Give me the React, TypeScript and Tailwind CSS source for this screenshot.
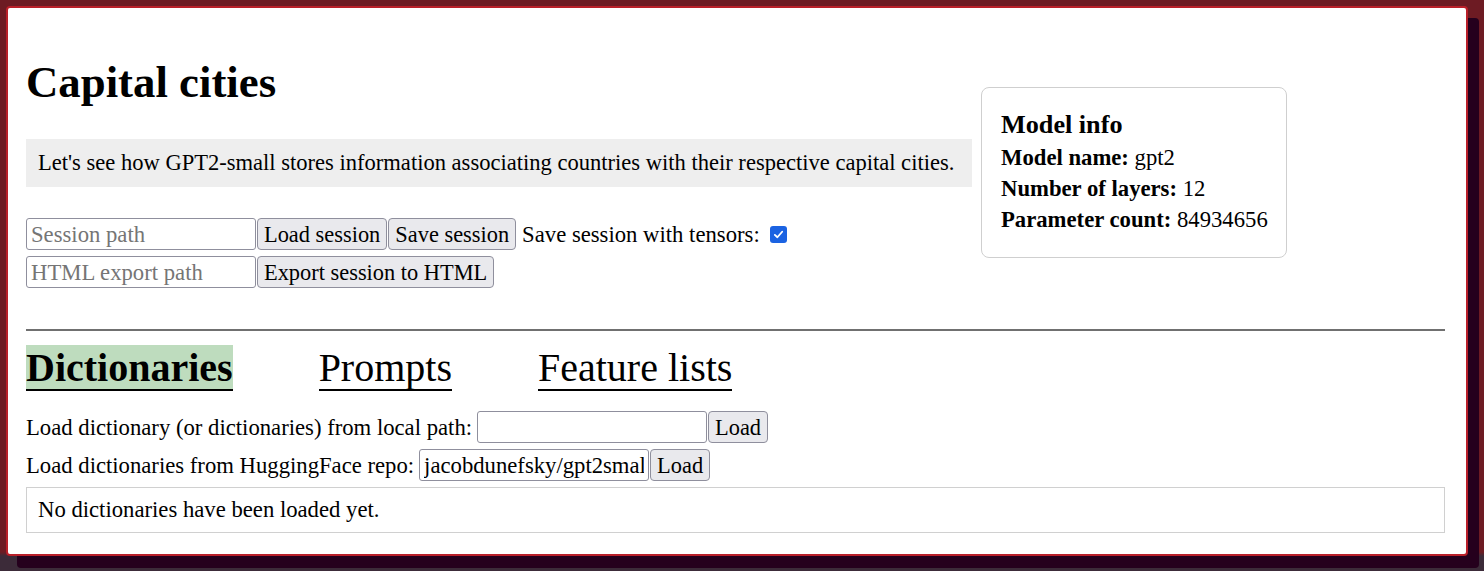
import React from "react";

function Checkbox() {
  return (
    <span className="ml-[9px] mt-[1px] inline-flex h-[17px] w-[17px] items-center justify-center rounded-[3px] bg-[#1b63e2]">
      <svg width="11" height="11" viewBox="0 0 12 12" fill="none">
        <path d="M2 6.4 L4.8 9 L10 3" stroke="white" strokeWidth="2" strokeLinecap="round" strokeLinejoin="round" />
      </svg>
    </span>
  );
}

const inputCls =
  "h-[32px] w-[230px] border border-[#8f8f9d] rounded-[3px] px-[4px] pt-[2px] bg-white text-black placeholder:text-[#757575] outline-none";
const btnCls =
  "h-[32px] px-[6px] pt-[1px] border border-[#8f8f9d] rounded-[4px] bg-[#e9e9ed] text-black whitespace-nowrap text-[22.4px] leading-[26px]";

export default function App() {
  return (
    <div className="w-[1484px] h-[571px] overflow-hidden pt-[6px] pl-[6px] bg-[linear-gradient(to_bottom,#6d1b23_0px,#6d1b23_552px,#3c2b39_556px)] font-['Liberation_Serif',serif] text-[22.7px] text-black">
      <div className="w-[1462px] h-[550px] bg-white border-2 border-[#b91f29] rounded-[4px] shadow-[11px_12px_0_0_#25001d] pt-[21px] pl-[18px] pr-[21px]">
        <div className="flex items-start gap-[9px]">
          <div className="w-[946px] shrink-0">
            <h1 className="mt-[28px] mb-[31px] text-[44.8px] leading-[51px] font-bold">Capital cities</h1>
            <div className="bg-[#eeeeee] px-[12px] py-[11px] text-[22.55px] leading-[26px] whitespace-nowrap overflow-hidden">
              Let's see how GPT2-small stores information associating countries with their respective capital cities.
            </div>
            <div className="mt-[31px] flex h-[32px] items-center gap-[1px]">
              <input className={inputCls} placeholder="Session path" />
              <button className={btnCls}>Load session</button>
              <button className={btnCls}>Save session</button>
              <span className="ml-[5px] pt-[2px] leading-[26px]">Save session with tensors:</span>
              <Checkbox />
            </div>
            <div className="mt-[6px] flex h-[32px] items-center gap-[1px]">
              <input className={inputCls} placeholder="HTML export path" />
              <button className={btnCls}>Export session to HTML</button>
            </div>
          </div>
          <div className="mt-[58px] w-[306px] border border-[#cfcfcf] rounded-[8px] pl-[19px] pt-[22px] pb-[22px]">
            <div className="text-[26.2px] leading-[30px] font-bold">Model info</div>
            <div className="mt-[2px] leading-[31px]">
              <b>Model name:</b> gpt2
            </div>
            <div className="leading-[31px]">
              <b>Number of layers:</b> 12
            </div>
            <div className="leading-[31px]">
              <b>Parameter count:</b> 84934656
            </div>
          </div>
        </div>

        <div className="mt-[41px] h-[2px] bg-[#707070]" />

        <div className="mt-[14px] flex gap-[86px] text-[40px] leading-[43px]">
          <span className="font-bold bg-[#bedcbe] border-b-2 border-black pt-[1px]">Dictionaries</span>
          <span className="border-b-2 border-black pt-[1px]">Prompts</span>
          <span className="border-b-2 border-black pt-[1px]">Feature lists</span>
        </div>

        <div className="mt-[20px] flex h-[32px] items-center">
          <span className="mr-[5px] pt-[1px] leading-[26px]">Load dictionary (or dictionaries) from local path:</span>
          <input className={inputCls} />
          <button className={btnCls + " ml-[1px]"}>Load</button>
        </div>
        <div className="mt-[6px] flex h-[32px] items-center">
          <span className="mr-[5px] pt-[1px] leading-[26px]">Load dictionaries from HuggingFace repo:</span>
          <input className={inputCls} readOnly value="jacobdunefsky/gpt2small-transcoders" />
          <button className={btnCls + " ml-[1px]"}>Load</button>
        </div>

        <div className="mt-[6px] border border-[#d0d0d0] px-[11px] py-[9px] leading-[26px]">
          No dictionaries have been loaded yet.
        </div>
      </div>
    </div>
  );
}
